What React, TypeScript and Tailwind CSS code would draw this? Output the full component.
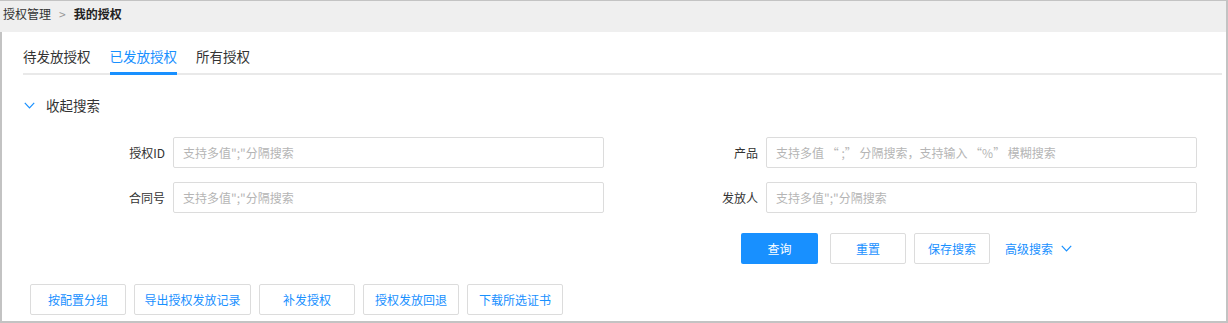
import React from "react";

const font = { fontFamily: '"Noto Sans CJK SC", "Noto Sans", sans-serif' };

function Chevron({ className }: { className?: string }) {
  return (
    <svg className={className} width="11" height="7" viewBox="0 0 11 7" fill="none">
      <polyline points="0.8,0.8 5.5,5.8 10.2,0.8" stroke="currentColor" strokeWidth="1.2" />
    </svg>
  );
}

function Field({ label, placeholder }: { label: string; placeholder: string }) {
  return (
    <div className="flex items-center">
      <div className="w-[90px] text-right text-[12px] text-[#333]">{label}</div>
      <div className="ml-[8px] w-[431px] h-[31px] border border-[#dcdcdc] rounded-[2px] flex items-center pl-[9px] text-[12px] text-[#b5b5b5]">
        {placeholder}
      </div>
    </div>
  );
}

export default function App() {
  const tabs = ["待发放授权", "已发放授权", "所有授权"];
  const bottom = [
    { t: "按配置分组", w: "w-[96px]" },
    { t: "导出授权发放记录", w: "w-[117px]" },
    { t: "补发授权", w: "w-[96px]" },
    { t: "授权发放回退", w: "w-[96px]" },
    { t: "下载所选证书", w: "w-[96px]" },
  ];
  return (
    <div style={font} className="w-[1228px] h-[323px] bg-[#c3c3c3] pt-[1px] pr-[2px] pb-[2px] flex flex-col">
      <div className="h-[31px] bg-[#efefef] pl-[3px] pt-[4px] flex items-start text-[12px] leading-[18px]">
        <span className="text-[#333]">授权管理</span>
        <span className="text-[#999] ml-[8px] mr-[8px]">&gt;</span>
        <span className="text-[#222] font-bold">我的授权</span>
      </div>
      <div className="flex-1 bg-white border-l-[2px] border-[#c3c3c3] flex flex-col">
        <div className="ml-[21px] mr-[4px] pt-[14px] flex gap-[19px] border-b-[2px] border-[#e9e9e9]">
          {tabs.map((t, i) => (
            <div
              key={t}
              className={
                i === 1
                  ? "text-[13.5px] leading-[20px] pb-[6px] -mb-[2px] border-b-[3px] border-[#1890ff] text-[#1890ff]"
                  : "text-[13.5px] leading-[20px] pb-[6px] -mb-[2px] border-b-[3px] border-transparent text-[#333]"
              }
            >
              {t}
            </div>
          ))}
        </div>
        <div className="mt-[20px] ml-[22px] flex items-center h-[20px] text-[13.5px] text-[#333]">
          <Chevron className="text-[#1890ff] mr-[11px]" />
          <span>收起搜索</span>
        </div>
        <div className="mt-[22px] flex flex-col gap-[14px] pl-[73px]">
          <div className="flex gap-[64px]">
            <Field label="授权ID" placeholder={"支持多值\";\"分隔搜索"} />
            <Field label="产品" placeholder={"支持多值 “ ;” 分隔搜索，支持输入 “%” 模糊搜索"} />
          </div>
          <div className="flex gap-[64px]">
            <Field label="合同号" placeholder={"支持多值\";\"分隔搜索"} />
            <Field label="发放人" placeholder={"支持多值\";\"分隔搜索"} />
          </div>
        </div>
        <div className="mt-[20px] pl-[739px] flex items-center text-[12px]">
          <div className="w-[77px] h-[31px] rounded-[2px] bg-[#1890ff] text-white flex items-center justify-center">查询</div>
          <div className="ml-[12px] w-[76px] h-[31px] rounded-[2px] border border-[#dcdcdc] text-[#1890ff] flex items-center justify-center">重置</div>
          <div className="ml-[8px] w-[76px] h-[31px] rounded-[2px] border border-[#dcdcdc] text-[#1890ff] flex items-center justify-center">保存搜索</div>
          <div className="ml-[15px] flex items-center text-[#1890ff]">
            <span>高级搜索</span>
            <Chevron className="ml-[8px] text-[#1890ff]" />
          </div>
        </div>
        <div className="mt-[20px] pl-[28px] flex gap-[8px] text-[12px]">
          {bottom.map((b) => (
            <div
              key={b.t}
              className={`${b.w} h-[31px] rounded-[2px] border border-[#dcdcdc] text-[#1890ff] flex items-center justify-center`}
            >
              {b.t}
            </div>
          ))}
        </div>
      </div>
    </div>
  );
}
